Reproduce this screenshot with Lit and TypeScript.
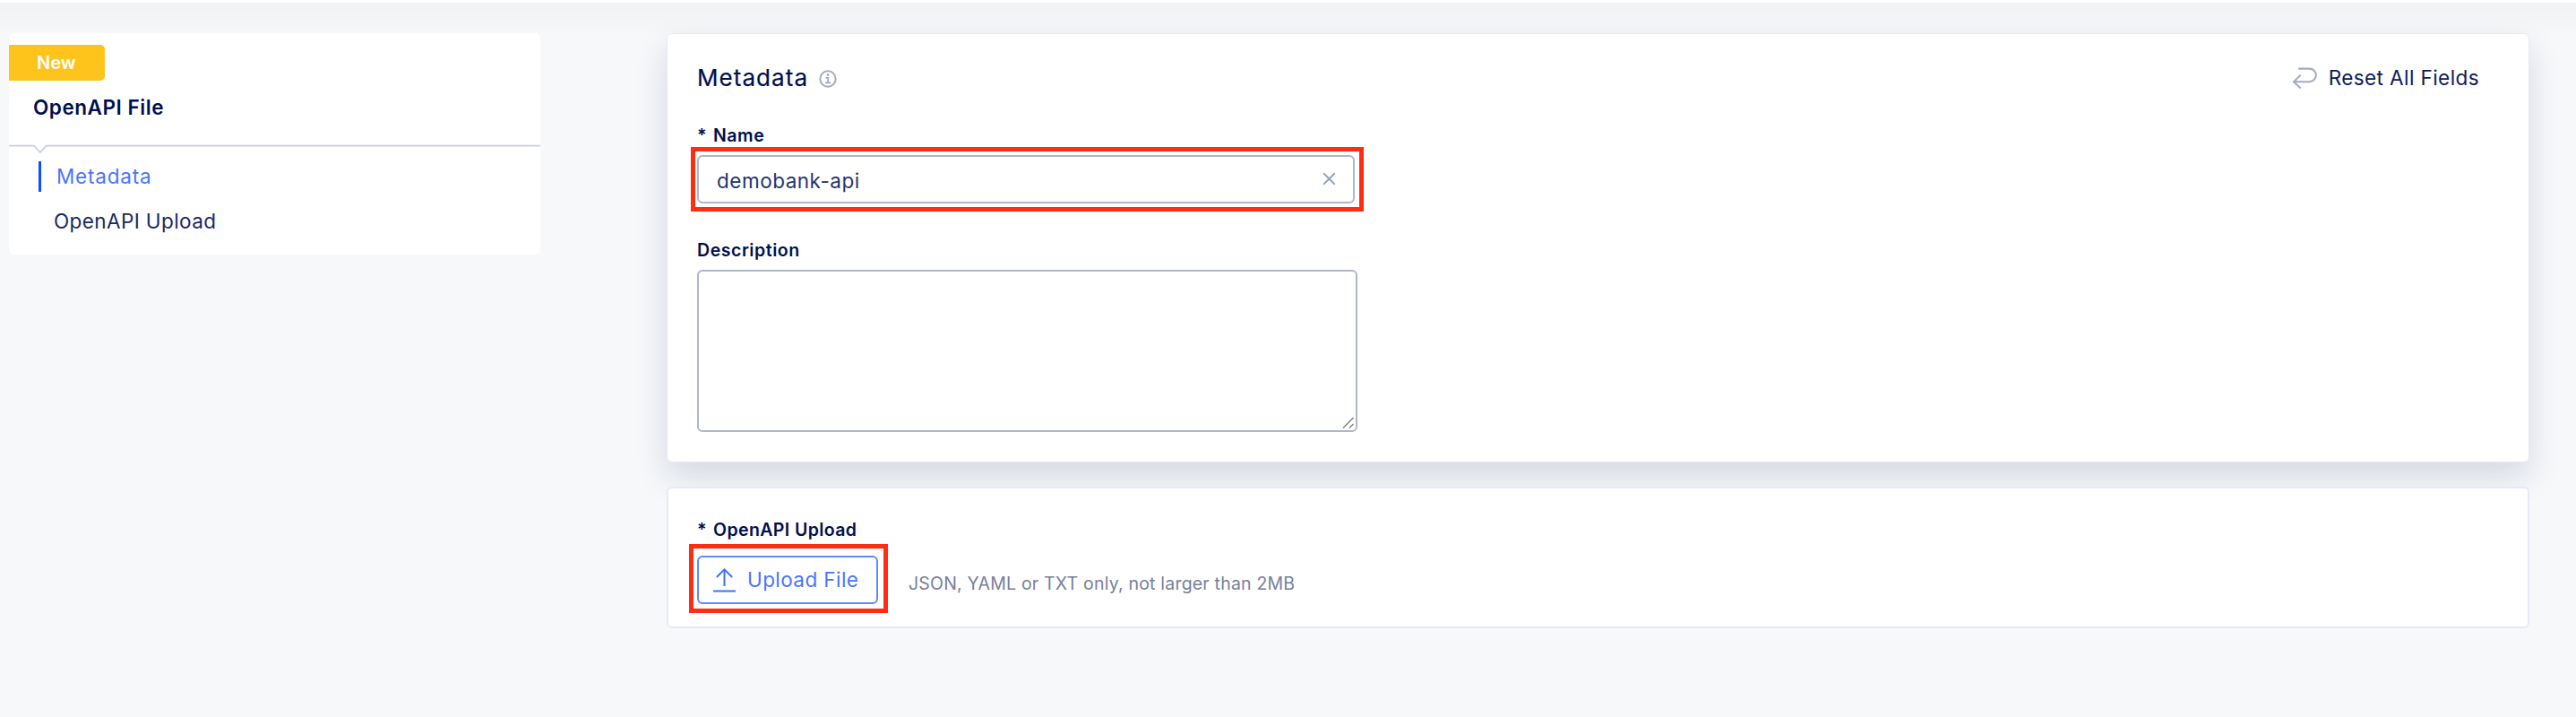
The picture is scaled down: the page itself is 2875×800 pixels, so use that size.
import { LitElement, html, css } from "lit";
import { customElement, property, state } from "lit/decorators.js";

@customElement("side-nav")
export class SideNav extends LitElement {
  @property() active = "Metadata";
  private items = ["Metadata", "OpenAPI Upload"];

  static styles = css`
    :host { display: block; width: 593px; height: 247px; background: #fff; border-radius: 6px; color: #000f4f; overflow: hidden; }
    .badge { margin-top: 13px; width: 107px; height: 40px; line-height: 40px; padding-left: 31px; box-sizing: border-box; background: #ffc41c; border-radius: 0 5px 5px 0; color: #fff; font-weight: 600; font-size: 20px; }
    .title { margin: 14px 0 0 27px; height: 32px; line-height: 32px; font-weight: 600; font-size: 22.5px; letter-spacing: 0.55px; }
    .rule { display: block; margin-top: 25px; width: 594px; height: 12px; }
    .items { padding: 7px 0 0 33px; }
    .item { height: 34px; line-height: 33px; margin-bottom: 16px; padding-left: 17px; font-size: 22.5px; letter-spacing: 0.4px; color: #1a2863; }
    .item.active { border-left: 3px solid #0d4dff; color: #4a74ff; letter-spacing: 0.8px; }
  `;

  render() {
    return html`
      <div class="badge">New</div>
      <div class="title">OpenAPI File</div>
      <svg class="rule" viewBox="0 0 594 12" fill="none" stroke="#c9cde4" stroke-width="1.7">
        <path d="M0 1.6H28L34.8 9L41.6 1.6H594" />
      </svg>
      <div class="items">
        ${this.items.map((name) => html`<div class="item ${name === this.active ? "active" : ""}">${name}</div>`)}
      </div>
    `;
  }
}

@customElement("app-root")
export class AppRoot extends LitElement {
  @state() private name = "demobank-api";

  static styles = css`
    :host { display: block; height: 800px; box-sizing: border-box; overflow: hidden; border-top: 3px solid #fff; font-family: Inter, sans-serif; color: #000f4f; background: linear-gradient(#f1f2f4 0, #f3f4f6 15px, #f6f8fa 38px, #f6f8fa 100%); }
    .page { display: flex; padding: 34px 0 0 10px; }
    .main { margin-left: 141px; width: 2079px; }
    .card { box-sizing: border-box; width: 2079px; background: #fff; border: 2px solid #e7e9f5; border-radius: 6px; padding-left: 33px; position: relative; }
    .meta { height: 479px; border-width: 1px; padding: 33px 55px 0 34px; box-shadow: 0 16px 36px rgba(20, 28, 75, 0.14); }
    .upload { height: 158px; margin-top: 27px; padding-top: 34px; }
    .head { display: flex; height: 32px; align-items: center; }
    .title { font-size: 26px; font-weight: 400; letter-spacing: 1.05px; line-height: 32px; margin-left: -1px; -webkit-text-stroke: 0.2px #000f4f; }
    .info { width: 20px; height: 20px; margin-left: 12px; margin-top: 2px; }
    .reset { margin-left: auto; display: flex; align-items: center; font-size: 22.5px; letter-spacing: 0.42px; line-height: 32px; color: #0d1b5c; }
    .reset svg { width: 28px; height: 26px; margin-right: 13px; }
    .label { height: 24px; line-height: 24px; font-size: 19.5px; font-weight: 600; letter-spacing: 0.55px; margin-left: -1px; }
    .label.name { margin-top: 36px; }
    .label.wide { letter-spacing: 0.4px; }
    .star { display: inline-block; width: 18px; }
    .field { position: relative; box-sizing: border-box; width: 734px; height: 54px; margin-top: 10px; margin-left: -1px; border: 2px solid #b0b6ca; border-radius: 6px; display: flex; align-items: center; padding: 0 19px 0 20px; font-size: 22.5px; letter-spacing: 0.51px; color: #26346e; }
    .field .value { flex: 1; line-height: 30px; padding-top: 3px; }
    .clear { width: 15px; height: 15px; margin-top: -1px; }
    .area { display: flex; box-sizing: border-box; width: 737px; height: 181px; margin-top: 10px; margin-left: -1px; border: 2px solid #b0b6ca; border-radius: 6px; align-items: flex-end; justify-content: flex-end; padding: 1px; }
    .grip { width: 14px; height: 14px; }
    .description { margin-top: 40px; }
    .row { display: flex; }
    .btn { position: relative; box-sizing: border-box; width: 202px; height: 54px; margin-top: 17px; margin-left: -1px; border: 2px solid #6189ff; border-radius: 6px; display: flex; align-items: center; padding-left: 16px; font-size: 22.5px; letter-spacing: 0.42px; color: #4a74ff; line-height: 30px; }
    .btn svg { width: 25px; height: 28px; margin-right: 13px; }
    .hint { margin-top: 36px; margin-left: 34px; height: 24px; line-height: 24px; font-size: 19.5px; letter-spacing: 0.2px; color: #77809b; }
    .mark { position: absolute; box-sizing: border-box; border: 5px solid #ff2d12; pointer-events: none; }
    .mark.name { left: -9px; top: -11px; width: 751px; height: 72px; }
    .mark.file { left: -11px; top: -15px; width: 222px; height: 77px; }
  `;

  render() {
    return html`
      <div class="page">
        <side-nav></side-nav>
        <div class="main">
          <section class="card meta">
            <div class="head">
              <div class="title">Metadata</div>
              <svg class="info" viewBox="0 0 20 20" fill="none" stroke="#a3abc0" stroke-width="2">
                <circle cx="10" cy="10" r="8.7" />
                <path d="M7.6 8.8H10.2V14.3M7 14.3H13.2" stroke-width="1.8" />
                <circle cx="10" cy="5.5" r="1.4" fill="#a3abc0" stroke="none" />
              </svg>
              <div class="reset">
                <svg viewBox="0 0 28 26" fill="none" stroke="#a3abc0" stroke-width="2.1">
                  <path d="M7.2 2.6H19.5A7.3 7.3 0 0 1 19.5 17.2H2.2M9.6 9.7L2 17.2L9.6 24.4" />
                </svg>
                Reset All Fields
              </div>
            </div>
            <div class="label name"><span class="star">*</span>Name</div>
            <div class="field">
              <span class="value">${this.name}</span>
              <svg class="clear" viewBox="0 0 15 15" fill="none" stroke="#98a2ba" stroke-width="2">
                <path d="M1.2 1.2L13.8 13.8M13.8 1.2L1.2 13.8" />
              </svg>
              <div class="mark name"></div>
            </div>
            <div class="label description">Description</div>
            <div class="area">
              <svg class="grip" viewBox="0 0 14 14" fill="none" stroke="#777" stroke-width="1.2">
                <path d="M1 12.5L12.5 1M8 12.5L12.5 8" />
              </svg>
            </div>
          </section>
          <section class="card upload">
            <div class="label wide"><span class="star">*</span>OpenAPI Upload</div>
            <div class="row">
              <div class="btn">
                <svg viewBox="0 0 25 28" fill="none" stroke="#3f6fff" stroke-width="2">
                  <path d="M12.5 21V2.5M3.8 11L12.5 2.3L21.2 11M0 26.4H25" />
                </svg>
                Upload File
                <div class="mark file"></div>
              </div>
              <div class="hint">JSON, YAML or TXT only, not larger than 2MB</div>
            </div>
          </section>
        </div>
      </div>
    `;
  }
}
